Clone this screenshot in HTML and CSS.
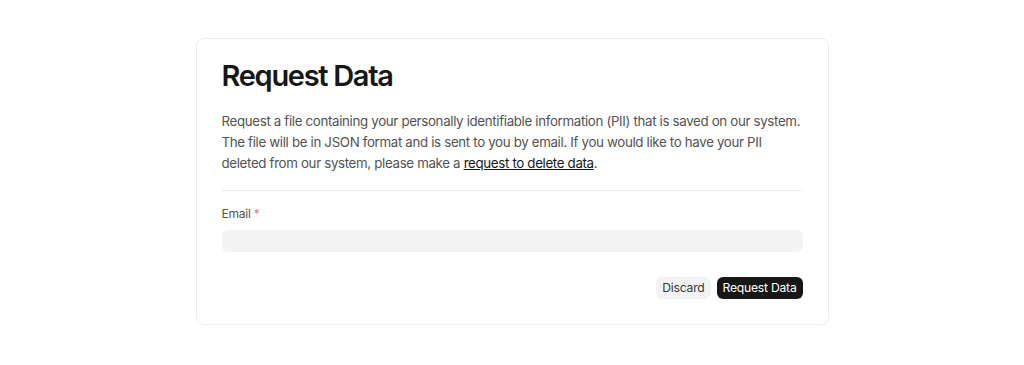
FILE: index.html
```html
<!DOCTYPE html>
<html lang="en">
<head>
    <meta charset="UTF-8">
    <meta name="viewport" content="width=device-width, initial-scale=1.0">
    <title>Request Data</title>
    <link rel="stylesheet" href="styles.css">
</head>
<body>
    <main>
        <div class="card">
            <h1>Request Data</h1>
            <p class="intro">
                Request a file containing your personally identifiable information (PII) that is saved on our system.<br>
                The file will be in JSON format and is sent to you by email. If you would like to have your PII<br>
                deleted from our system, please make a <a href="#">request to delete data</a>.
            </p>
            <hr class="divider">
            <div class="field">
                <label for="email">Email <span class="required">*</span></label>
                <input type="email" id="email">
            </div>
            <div class="actions">
                <button class="btn btn-secondary">Discard</button>
                <button class="btn btn-primary">Request Data</button>
            </div>
        </div>
    </main>
</body>
</html>
```

FILE: styles.css
```css
/* General body styles */
body {
    font-family: Inter, "Noto Sans", sans-serif;
    margin: 0;
    padding: 0;
    background-color: #fff;
    color: #171717;
}

main {
    display: flex;
    justify-content: center;
    padding-top: 38px;
}

/* Card */
.card {
    width: 633px;
    box-sizing: border-box;
    border: 1px solid #ededed;
    border-radius: 8px;
    padding: 19px 25px 25px;
}

.card h1 {
    font-size: 29px;
    font-weight: 600;
    line-height: 36px;
    letter-spacing: -0.045em;
    margin: 0 0 17px;
    color: #171717;
}

.intro {
    font-size: 13.3px;
    line-height: 21px;
    letter-spacing: -0.025em;
    color: #525252;
    margin: 0;
}

.intro a {
    color: #171717;
    text-decoration: underline;
}

.divider {
    border: 0;
    border-top: 1px solid #ededed;
    margin: 16px 0 15px;
}

/* Form field */
.field {
    display: flex;
    flex-direction: column;
    gap: 8px;
}

.field label {
    font-size: 12px;
    line-height: 16px;
    letter-spacing: -0.02em;
    color: #525252;
}

.required {
    color: #e0808a;
}

.field input {
    height: 22px;
    border: 0;
    border-radius: 6px;
    background-color: #f3f3f3;
    padding: 0 8px;
    font-family: inherit;
    font-size: 13px;
}

/* Buttons */
.actions {
    display: flex;
    justify-content: flex-end;
    gap: 6px;
    margin-top: 25px;
}

.btn {
    height: 22px;
    padding: 0 6px;
    border: 0;
    border-radius: 6px;
    font-family: inherit;
    font-size: 12.2px;
    line-height: 22px;
    letter-spacing: -0.02em;
    cursor: pointer;
}

.btn-secondary {
    background-color: #f3f3f3;
    color: #383838;
}

.btn-primary {
    background-color: #171717;
    color: #fff;
}
```
